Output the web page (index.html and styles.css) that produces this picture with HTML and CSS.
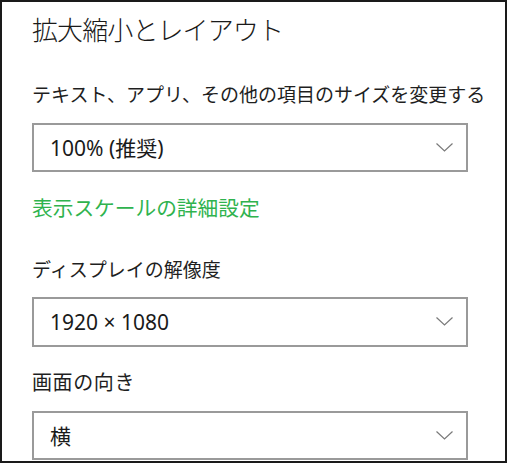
FILE: index.html
```html
<!DOCTYPE html>
<html lang="ja">
<head>
<meta charset="utf-8">
<link rel="stylesheet" href="styles.css">
</head>
<body>
<div class="frame">
  <h1 class="title">拡大縮小とレイアウト</h1>
  <p class="label label-scale">テキスト、アプリ、その他の項目のサイズを変更する</p>
  <div class="select select-scale">
    <span class="value">100% (推奨)</span>
    <svg class="chev" width="17" height="9" viewBox="0 0 17 9"><path d="M0.5 0.5 L8.5 8 L16.5 0.5" fill="none" stroke="#7a7a7a" stroke-width="1.2"/></svg>
  </div>
  <a class="link">表示スケールの詳細設定</a>
  <p class="label label-res">ディスプレイの解像度</p>
  <div class="select select-res">
    <span class="value">1920 × 1080</span>
    <svg class="chev" width="17" height="9" viewBox="0 0 17 9"><path d="M0.5 0.5 L8.5 8 L16.5 0.5" fill="none" stroke="#7a7a7a" stroke-width="1.2"/></svg>
  </div>
  <p class="label label-ori">画面の向き</p>
  <div class="select select-ori">
    <span class="value">横</span>
    <svg class="chev" width="17" height="9" viewBox="0 0 17 9"><path d="M0.5 0.5 L8.5 8 L16.5 0.5" fill="none" stroke="#7a7a7a" stroke-width="1.2"/></svg>
  </div>
</div>
</body>
</html>
```

FILE: styles.css
```css
html, body {
  margin: 0;
  padding: 0;
  background: #ffffff;
}
body {
  font-family: "Noto Sans", "Noto Sans CJK JP", sans-serif;
  color: #1f1f1f;
}
.frame {
  box-sizing: border-box;
  width: 507px;
  height: 463px;
  border: 2px solid #1a1a1a;
  padding: 14px 0 0 30px;
  overflow: hidden;
  display: flex;
  flex-direction: column;
  align-items: flex-start;
}
.title {
  margin: 0;
  font-family: "Noto Sans CJK JP", sans-serif;
  font-weight: 300;
  font-size: 26px;
  line-height: 26px;
  letter-spacing: -0.9px;
  color: #1a1a1a;
}
.label {
  margin: 0;
  font-family: "Noto Sans CJK JP", sans-serif;
  font-size: 19px;
  line-height: 19px;
  color: #1f1f1f;
}
.label-scale {
  margin-top: 42px;
  letter-spacing: 0;
}
.label-res {
  margin-top: 41px;
}
.label-ori {
  margin-top: 25px;
  font-size: 20px;
  line-height: 20px;
  letter-spacing: 0.6px;
}
.select {
  box-sizing: border-box;
  width: 436px;
  height: 49px;
  border: 2px solid #9a9a9a;
  padding: 1px 13px 0 16px;
  display: flex;
  align-items: center;
  justify-content: space-between;
  background: #fff;
}
.select-scale { margin-top: 20px; }
.select-res { margin-top: 19px; height: 50px; }
.select-ori { margin-top: 19px; }
.value {
  font-family: "Noto Sans", "Noto Sans CJK JP", sans-serif;
  font-size: 21px;
  line-height: 21px;
  color: #1a1a1a;
}
.chev {
  display: block;
  margin-top: -2px;
}
.link {
  margin-top: 25px;
  font-family: "Noto Sans CJK JP", sans-serif;
  font-size: 20.7px;
  line-height: 21px;
  color: #2fb34e;
  text-decoration: none;
}
```
